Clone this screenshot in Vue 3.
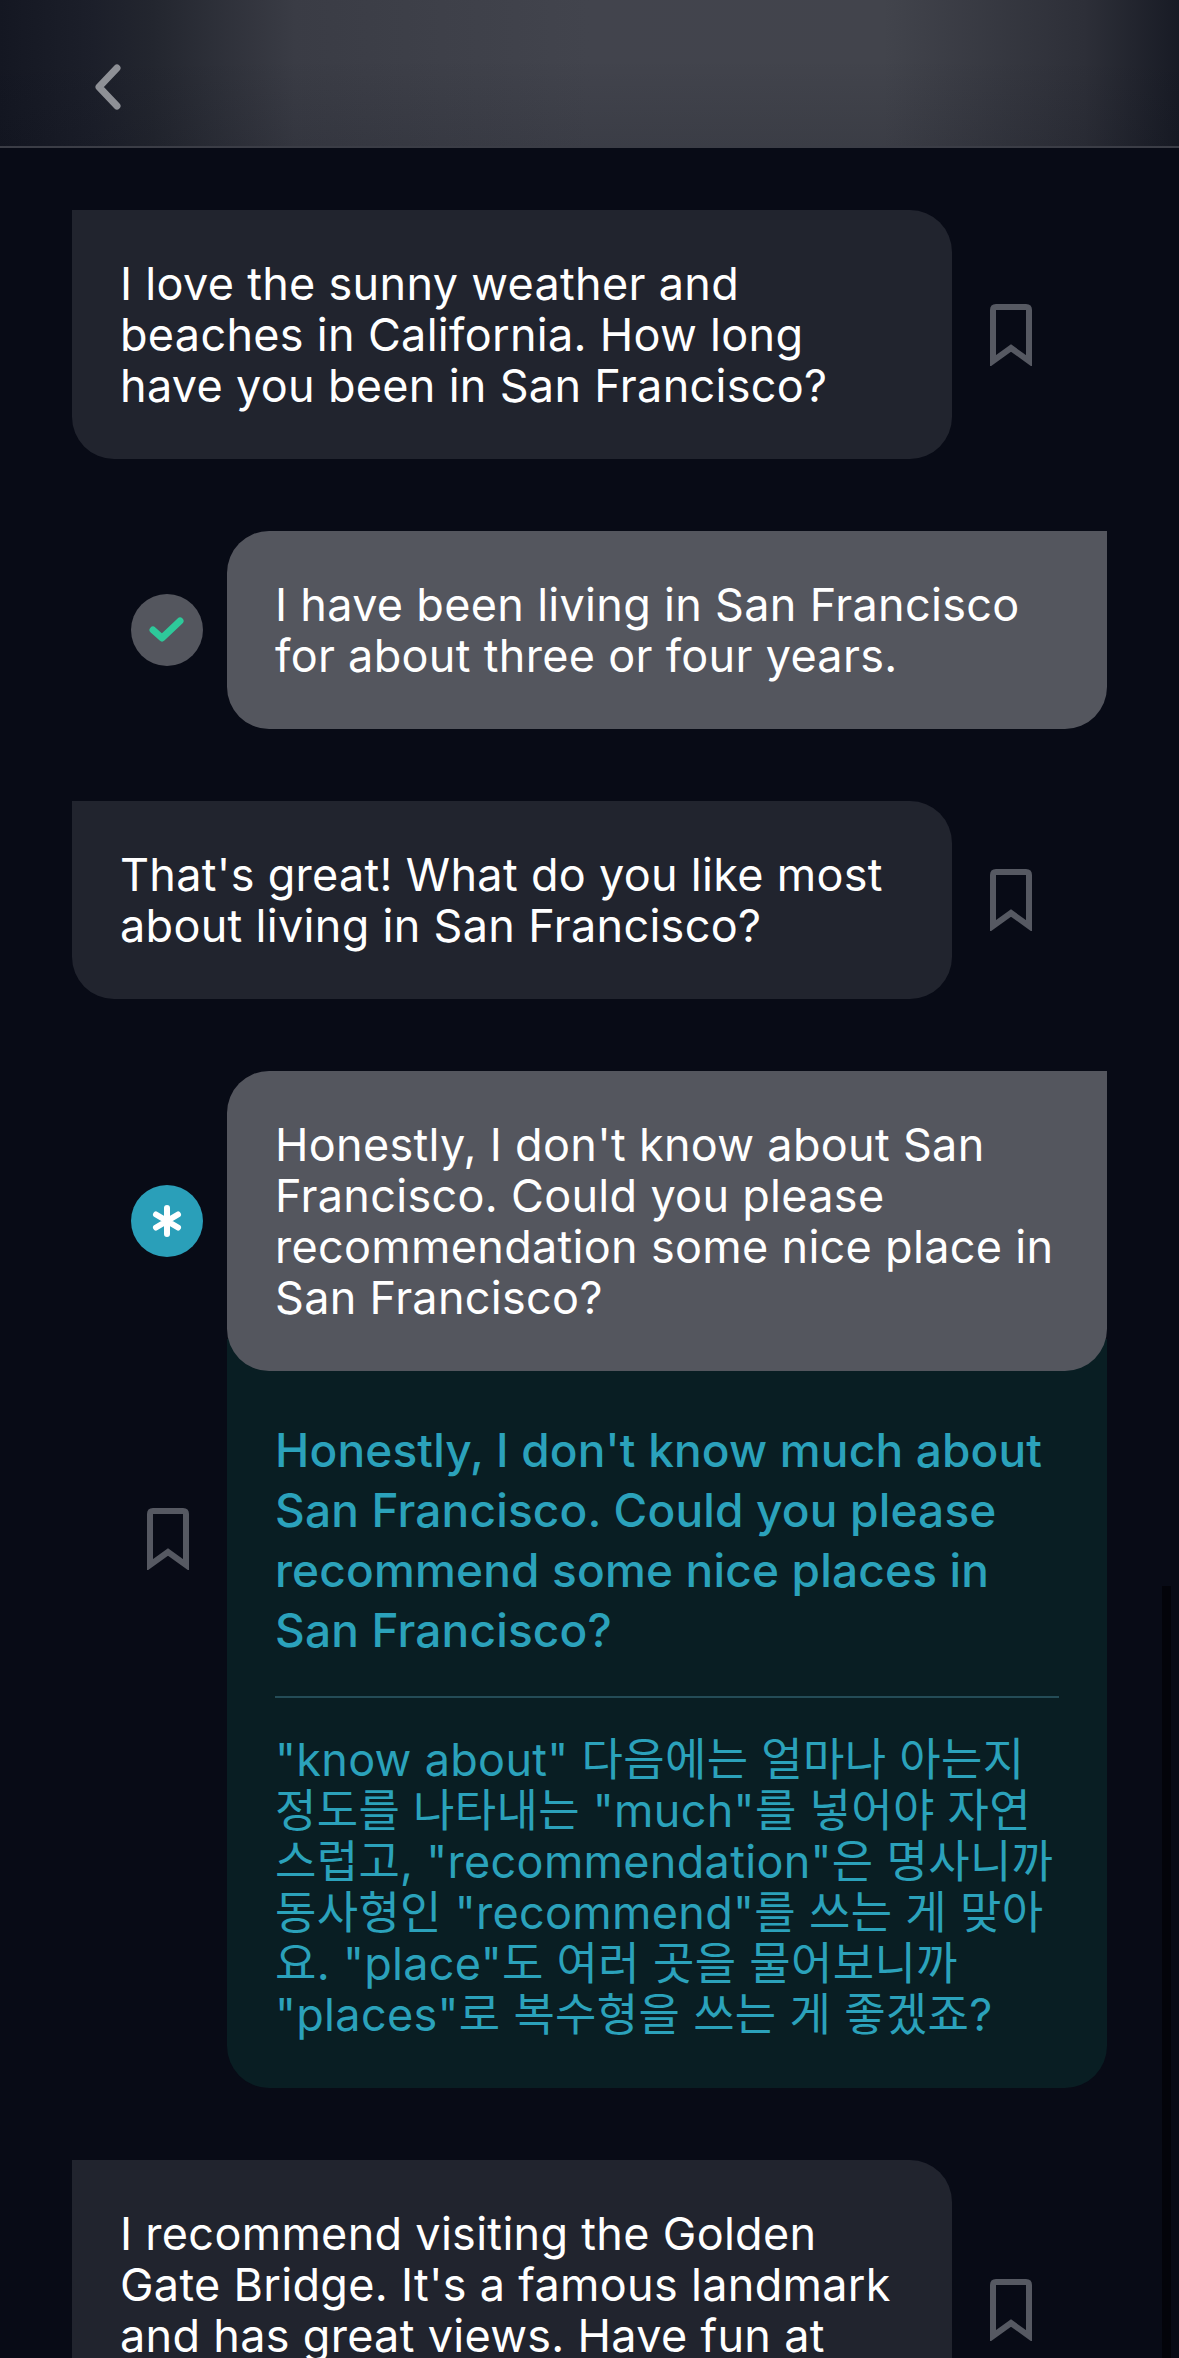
<script setup>
const bookmark = 'M3 57V6Q3 3 6 3H36Q39 3 39 6V57L21 44Z'
</script>

<template>
  <div class="screen">
    <header class="header">
      <svg class="back" width="26" height="46" viewBox="0 0 26 46">
        <path d="M22 4 4 23l18 19" />
      </svg>
    </header>

    <main class="chat">
      <div class="row">
        <div class="bubble bot">I love the sunny weather and<br />beaches in California. How long<br />have you been in San Francisco?</div>
        <svg class="mark" width="42" height="62" viewBox="0 0 42 62"><path :d="bookmark" /></svg>
      </div>

      <div class="row user">
        <div class="status ok">
          <svg width="36" height="28" viewBox="0 0 36 28"><path d="M4 14l9 8L31 5" /></svg>
        </div>
        <div class="bubble me">I have been living in San Francisco<br />for about three or four years.</div>
      </div>

      <div class="row">
        <div class="bubble bot">That's great! What do you like most<br />about living in San Francisco?</div>
        <svg class="mark" width="42" height="62" viewBox="0 0 42 62"><path :d="bookmark" /></svg>
      </div>

      <div class="group">
        <div class="row user">
          <div class="status fix">
            <svg width="32" height="32" viewBox="0 0 32 32"><path d="M16 3v26M5 9.5l22 13M27 9.5l-22 13" /></svg>
          </div>
          <div class="bubble me top">Honestly, I don't know about San<br />Francisco. Could you please<br />recommendation some nice place in<br />San Francisco?</div>
        </div>
        <div class="row user lower">
          <div class="side">
            <svg class="mark" width="42" height="62" viewBox="0 0 42 62"><path :d="bookmark" /></svg>
          </div>
          <div class="panel">
            <p class="fixed">Honestly, I don't know much about<br />San Francisco. Could you please<br />recommend some nice places in<br />San Francisco?</p>
            <div class="line"></div>
            <p class="note">"know about" 다음에는 얼마나 아는지<br />정도를 나타내는 "much"를 넣어야 자연<br />스럽고, "recommendation"은 명사니까<br />동사형인 "recommend"를 쓰는 게 맞아<br />요. "place"도 여러 곳을 물어보니까<br />"places"로 복수형을 쓰는 게 좋겠죠?</p>
          </div>
        </div>
      </div>

      <div class="row">
        <div class="bubble bot">I recommend visiting the Golden<br />Gate Bridge. It's a famous landmark<br />and has great views. Have fun at<br />the bridge!</div>
        <svg class="mark" width="42" height="62" viewBox="0 0 42 62"><path :d="bookmark" /></svg>
      </div>
    </main>

    <div class="scrollbar"></div>
  </div>
</template>

<style>
html, body {
  margin: 0;
  background: #080b16;
}
</style>

<style scoped>
.screen {
  position: relative;
  width: 1179px;
  height: 2358px;
  overflow: hidden;
  background: #080b16;
  font-family: Inter, "Noto Sans CJK KR", sans-serif;
  font-size: 45px;
  line-height: 51px;
  letter-spacing: 0.3px;
  color: #fff;
}

.header {
  box-sizing: border-box;
  height: 148px;
  padding: 64px 0 0 95px;
  border-bottom: 2px solid #3b3d46;
  background:
    linear-gradient(180deg, rgba(7, 10, 21, 0) 40%, rgba(7, 10, 21, 0.12) 100%),
    linear-gradient(90deg, #141722 0, #1c1f2a 8%, #23262f 13%, #3a3c45 25%, #42444d 50%, #42444c 75%, #2d2f38 92%, #181b25 100%);
}

.back path {
  fill: none;
  stroke: #8e9096;
  stroke-width: 7;
  stroke-linecap: round;
  stroke-linejoin: round;
}

.chat {
  display: flex;
  flex-direction: column;
  gap: 72px;
  padding: 62px 72px 0;
}

.row {
  display: flex;
  align-items: center;
}

.user {
  padding-left: 59px;
}

.group {
  display: flex;
  flex-direction: column;
}

.bubble {
  box-sizing: border-box;
  flex: none;
  width: 880px;
  padding: 48px 48px;
}

.bot {
  background: #21242e;
  border-radius: 0 42px 42px 42px;
}

.me {
  background: #54565e;
  border-radius: 42px 0 42px 42px;
}

.top {
  position: relative;
  z-index: 1;
}

.mark {
  flex: none;
  margin-left: 38px;
}

.mark path {
  fill: none;
  stroke: #565962;
  stroke-width: 6;
  stroke-miterlimit: 8;
}

.status {
  display: flex;
  flex: none;
  align-items: center;
  justify-content: center;
  width: 72px;
  height: 72px;
  margin-right: 24px;
  border-radius: 50%;
}

.ok {
  background: #54565e;
}

.ok path {
  fill: none;
  stroke: #2ec99a;
  stroke-width: 7;
  stroke-linecap: round;
  stroke-linejoin: round;
}

.fix {
  background: #2a9fb9;
}

.fix path {
  fill: none;
  stroke: #fff;
  stroke-width: 6;
  stroke-linecap: round;
}

.lower {
  align-items: flex-start;
}

.side {
  flex: none;
  width: 96px;
  padding-top: 137px;
}

.side .mark {
  display: block;
  margin-left: 16px;
}

.panel {
  box-sizing: border-box;
  width: 880px;
  margin-top: -32px;
  padding: 81px 48px 48px;
  background: #091e23;
  border-radius: 0 0 42px 42px;
  color: #2ba2bb;
}

.panel p {
  margin: 0;
}

.fixed {
  font-size: 46px;
  font-weight: 500;
  letter-spacing: 0.17px;
  line-height: 60px;
}

.line {
  height: 2px;
  margin: 36px 0;
  background: #244c57;
}

.scrollbar {
  position: absolute;
  top: 1586px;
  right: 8px;
  bottom: 0;
  width: 9px;
  background: #03040a;
}
</style>
